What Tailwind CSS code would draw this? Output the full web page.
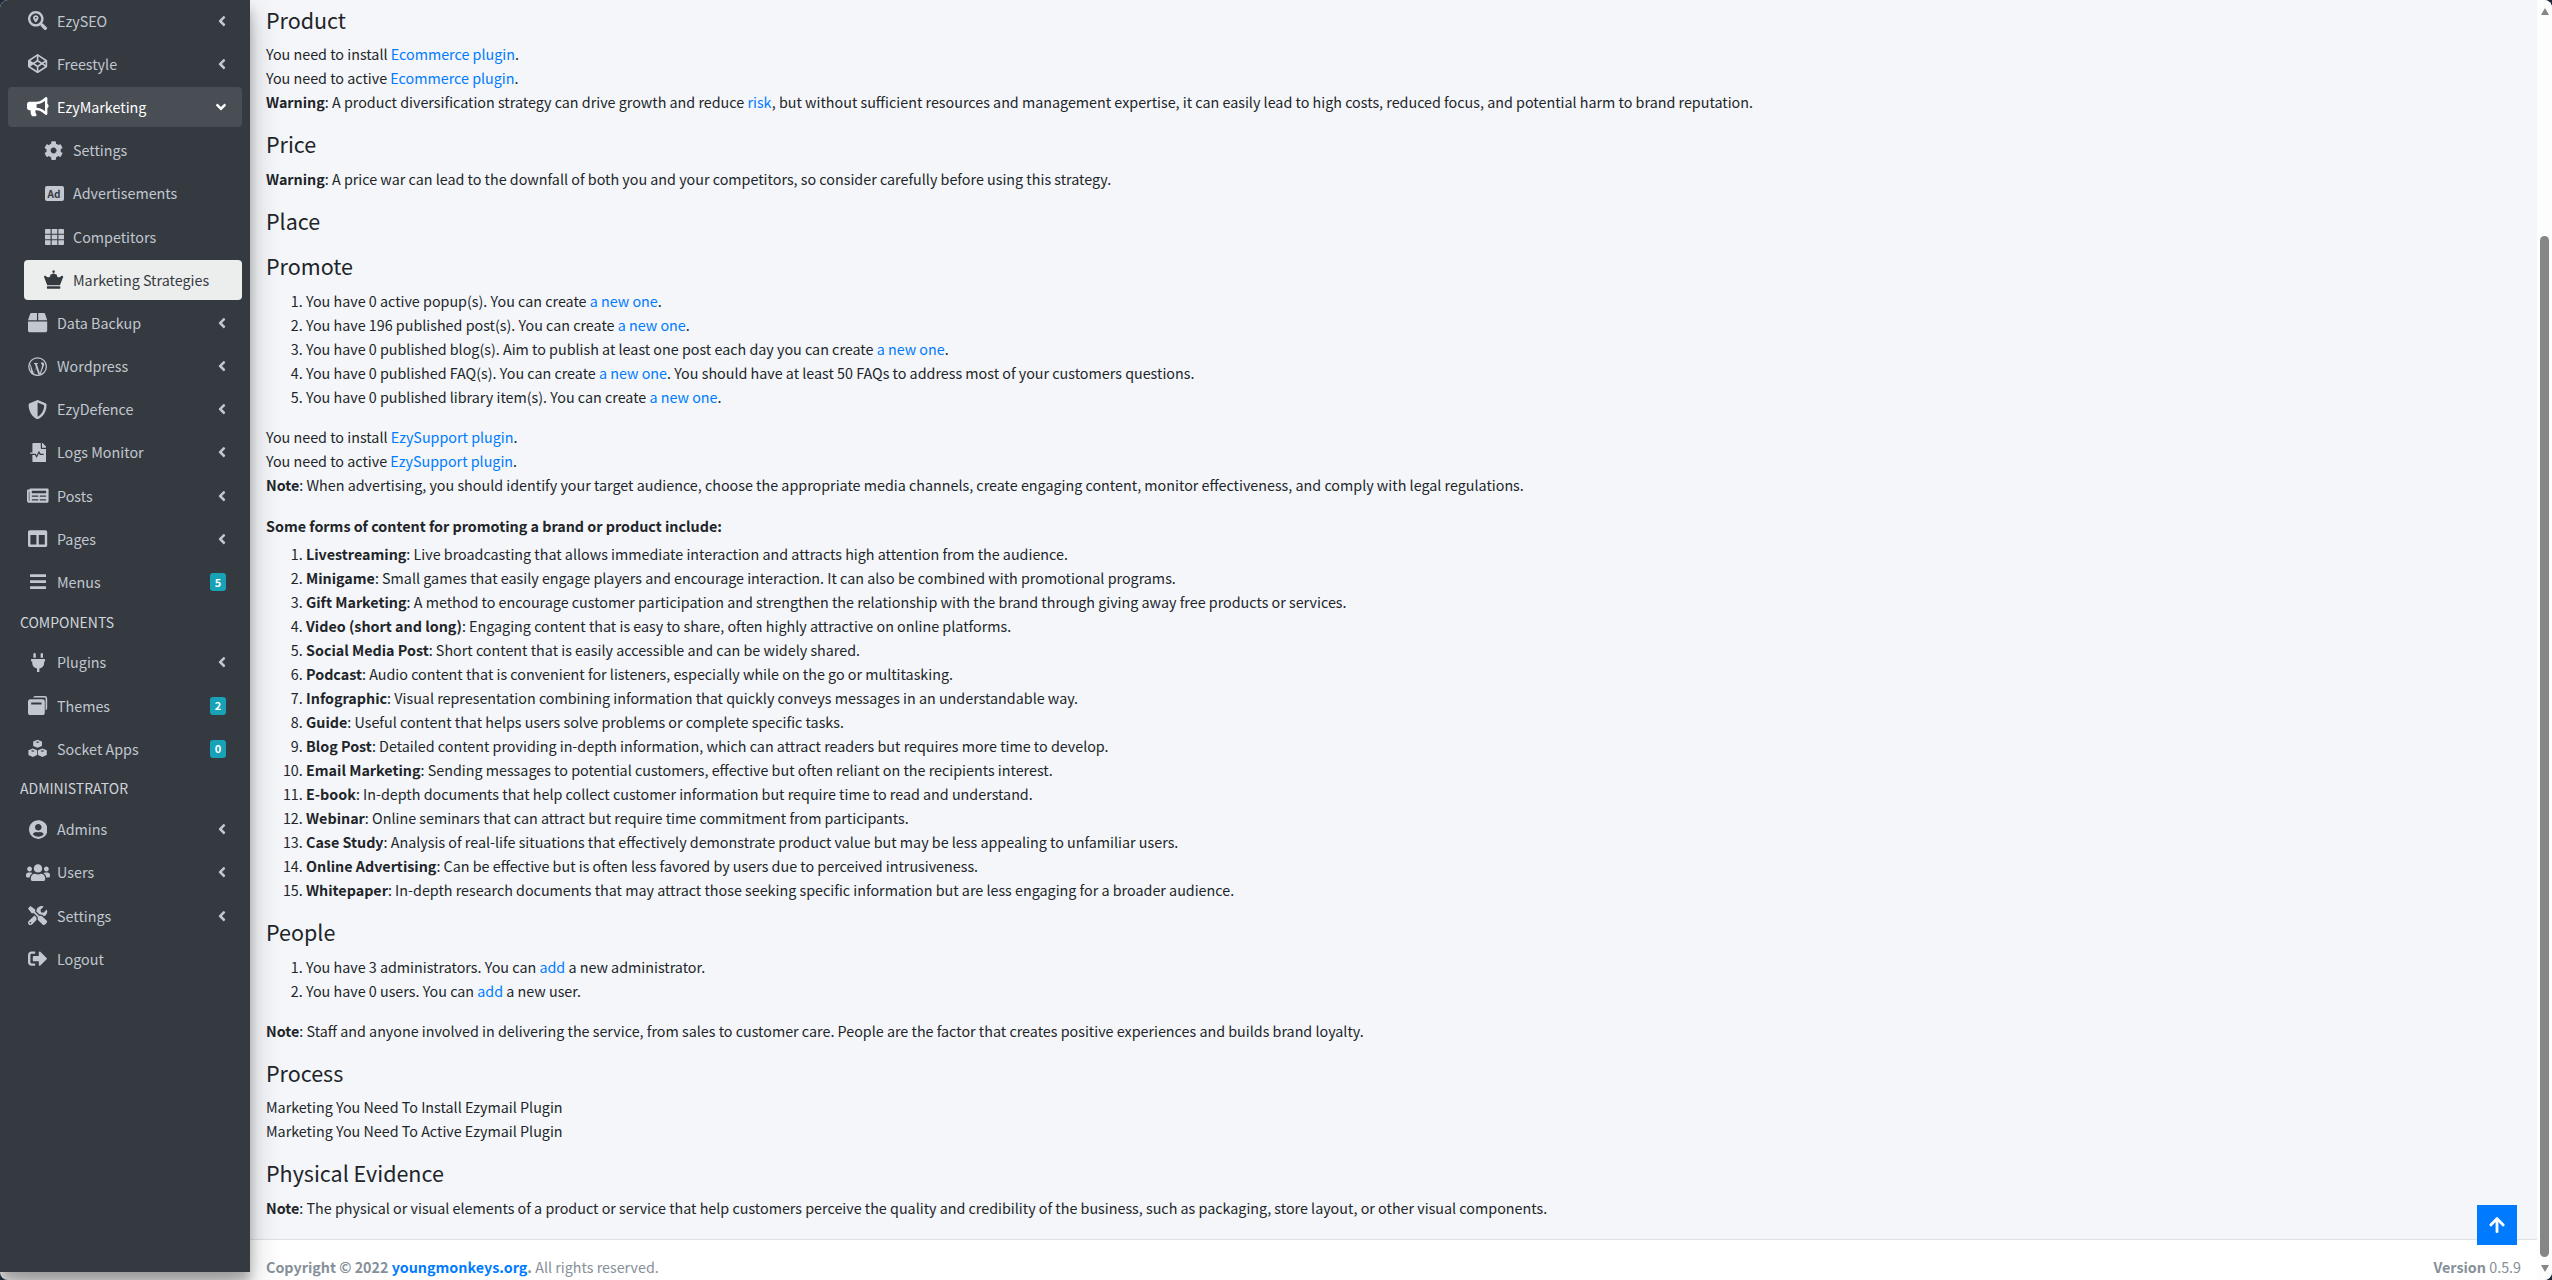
<!DOCTYPE html>
<html lang="en">
<head>
<meta charset="utf-8">
<title>Marketing Strategies</title>
<script src="https://cdn.jsdelivr.net/npm/@tailwindcss/browser@4"></script>
</head>
<body class="bg-[#1d2a3a] overflow-hidden font-['Noto_Sans_CJK_SC','Noto_Sans',sans-serif] text-[14.32px] leading-[24px] text-[#212529]">
<svg class="hidden" aria-hidden="true"><defs>
<symbol id="chev" viewBox="0 0 256 512"><path fill="currentColor" d="M31.7 239l136-136c9.4-9.4 24.6-9.4 33.9 0l22.6 22.6c9.4 9.4 9.4 24.6 0 33.9L127.9 256l96.4 96.4c9.4 9.4 9.4 24.6 0 33.9L201.7 413c-9.4 9.4-24.6 9.4-33.9 0l-136-136c-9.5-9.4-9.5-24.6-.1-34z"/></symbol>
</defs></svg>
<div class="relative flex w-[2552px] h-[1280px] overflow-hidden rounded-[8px] bg-white">
  <aside class="relative z-10 shrink-0 w-[250px] h-[1272px] bg-[#343a40] text-[#c2c7d0] pt-[0.6px] shadow-[0_14px_28px_rgba(0,0,0,0.25),0_10px_10px_rgba(0,0,0,0.22)]">
    <nav class="flex flex-col gap-[3.2px]">
      <a class="flex items-center h-10 mx-2 px-4"><span class="flex justify-center w-7 mr-[5px]"><svg class="h-[19.2px]" viewBox="0 0 512 512"><path fill="currentColor" d="M505.04 442.66l-99.71-99.69c-4.5-4.5-10.6-7-17-7h-16.3c27.6-35.3 44-79.69 44-127.99C416.03 93.09 322.92 0 208.02 0S0 93.09 0 207.98s93.11 207.98 208.02 207.98c48.3 0 92.71-16.4 128.01-44v16.3c0 6.4 2.5 12.5 7 17l99.71 99.69c9.4 9.4 24.6 9.4 33.9 0l28.3-28.3c9.4-9.4 9.4-24.59.1-33.99zm-297.02-90.7c-79.54 0-144-64.34-144-143.98 0-79.53 64.35-143.98 144-143.98 79.54 0 144 64.34 144 143.98 0 79.53-64.35 143.98-144 143.98zm.02-239.96c-40.78 0-73.84 33.05-73.84 73.83 0 32.96 48.26 93.05 66.75 114.86a9.24 9.24 0 0 0 14.18 0c18.49-21.81 66.75-81.9 66.75-114.86 0-40.78-33.06-73.83-73.84-73.83zm0 96c-13.59 0-24.61-11.02-24.61-24.61s11.02-24.61 24.61-24.61 24.61 11.02 24.61 24.61-11.01 24.61-24.61 24.61z"/></svg></span><span class="flex-1">EzySEO</span><svg class="w-2 h-4"><use href="#chev"/></svg></a>
      <a class="flex items-center h-10 mx-2 px-4"><span class="flex justify-center w-7 mr-[5px]"><svg class="h-[19.2px]" viewBox="0 0 512 512"><path fill="currentColor" d="M502.285 159.704l-234-156c-7.987-4.915-16.511-4.96-24.571 0l-234 156C3.714 163.703 0 170.847 0 177.989v155.999c0 7.143 3.714 14.286 9.715 18.286l234 156.022c7.987 4.915 16.511 4.96 24.571 0l234-156.022c6-3.999 9.715-11.143 9.715-18.286V177.989c-.001-7.142-3.715-14.286-9.716-18.285zM278 63.131l172.286 114.858-76.857 51.429L278 165.703V63.131zm-44 0v102.572l-95.429 63.715-76.857-51.429L234 63.131zM44 219.132v73.715l55.143-36.857L44 219.132zm190 229.715L61.714 333.989l76.857-51.429L234 346.275v102.572zm22-140.858l-77.715-52 77.715-52 77.715 52-77.715 52zm22 140.858V346.275l95.429-63.715 76.857 51.429L278 448.847zm190-156l-55.143-36.857L468 219.132v73.715z"/></svg></span><span class="flex-1">Freestyle</span><svg class="w-2 h-4"><use href="#chev"/></svg></a>
      <a class="flex items-center h-10 mx-2 px-4 rounded bg-white/10 text-white"><span class="flex justify-center w-7 mr-[5px]"><svg class="h-[19.2px]" viewBox="0 0 576 512"><path fill="currentColor" d="M576 240c0-23.63-12.95-44.04-32-55.12V32.01C544 23.26 537.02 0 512 0c-7.12 0-14.19 2.38-19.98 7.02l-85.03 68.03C364.28 109.19 310.66 128 256 128H64c-35.35 0-64 28.65-64 64v96c0 35.35 28.65 64 64 64h33.7c-1.39 10.48-2.18 21.14-2.18 32 0 39.77 9.26 77.35 25.56 110.94 5.19 10.69 16.52 17.06 28.4 17.06h74.28c26.05 0 41.69-29.84 25.9-50.56-16.4-21.52-26.15-48.36-26.15-77.44 0-11.11 1.62-21.79 4.41-32H256c54.66 0 108.28 18.81 150.98 52.95l85.03 68.03a32.023 32.023 0 0 0 19.98 7.02c24.92 0 32-22.78 32-32V295.13C563.05 284.04 576 263.63 576 240zm-96 141.42l-33.05-26.44C392.95 311.78 325.12 288 256 288v-96c69.12 0 136.95-23.78 190.95-66.98L480 98.58v282.84z"/></svg></span><span class="flex-1">EzyMarketing</span><svg class="w-[10px] h-4" viewBox="0 0 320 512"><path fill="currentColor" d="M143 352.3L7 216.3c-9.4-9.4-9.4-24.6 0-33.9l22.6-22.6c9.4-9.4 24.6-9.4 33.9 0l96.4 96.4 96.4-96.4c9.4-9.4 24.6-9.4 33.9 0l22.6 22.6c9.4 9.4 9.4 24.6 0 33.9l-136 136c-9.2 9.4-24.4 9.4-33.8 0z"/></svg></a>
      <a class="flex items-center h-10 ml-6 mr-2 px-4"><span class="flex justify-center w-7 mr-[5px]"><svg class="h-[19.2px]" viewBox="0 0 512 512"><path fill="currentColor" d="M487.4 315.7l-42.6-24.6c4.3-23.2 4.3-47 0-70.2l42.6-24.6c4.9-2.8 7.1-8.6 5.5-14-11.1-35.6-30-67.8-54.7-94.6-3.8-4.1-10-5.1-14.8-2.3L380.8 110c-17.9-15.4-38.5-27.3-60.8-35.1V25.8c0-5.6-3.9-10.5-9.4-11.7-36.7-8.2-74.3-7.8-109.2 0-5.5 1.2-9.4 6.1-9.4 11.7V75c-22.2 7.9-42.8 19.8-60.8 35.1L88.7 85.5c-4.9-2.8-11-1.9-14.8 2.3-24.7 26.7-43.6 58.9-54.7 94.6-1.7 5.4.6 11.2 5.5 14L67.3 221c-4.3 23.2-4.3 47 0 70.2l-42.6 24.6c-4.9 2.8-7.1 8.6-5.5 14 11.1 35.6 30 67.8 54.7 94.6 3.8 4.1 10 5.1 14.8 2.3l42.6-24.6c17.9 15.4 38.5 27.3 60.8 35.1v49.2c0 5.6 3.9 10.5 9.4 11.7 36.7 8.2 74.3 7.8 109.2 0 5.5-1.2 9.4-6.1 9.4-11.7v-49.2c22.2-7.9 42.8-19.8 60.8-35.1l42.6 24.6c4.9 2.8 11 1.9 14.8-2.3 24.7-26.7 43.6-58.9 54.7-94.6 1.5-5.5-.7-11.3-5.6-14.1zM256 336c-44.1 0-80-35.9-80-80s35.9-80 80-80 80 35.9 80 80-35.9 80-80 80z"/></svg></span><span class="flex-1">Settings</span></a>
      <a class="flex items-center h-10 ml-6 mr-2 px-4"><span class="flex justify-center w-7 mr-[5px]"><span class="flex items-center justify-center w-[19px] h-[15px] rounded-[2px] bg-[#c2c7d0] text-[#343a40] text-[10px] leading-[15px] font-bold">Ad</span></span><span class="flex-1">Advertisements</span></a>
      <a class="flex items-center h-10 ml-6 mr-2 px-4"><span class="flex justify-center w-7 mr-[5px]"><svg class="h-[16px]" viewBox="0 0 19 16"><path fill="currentColor" d="M0 1a1 1 0 0 1 1-1h4.600v4.700H0zM6.700 0h5.600v4.700H6.700zM13.400 0H18a1 1 0 0 1 1 1v3.700h-5.600zM0 5.700h5.600v4.600H0zM6.700 5.700h5.600v4.600H6.700zM13.400 5.700H19v4.600h-5.600zM0 11.300h5.600V16H1a1 1 0 0 1-1-1zM6.700 11.300h5.600V16H6.700zM13.400 11.300H19V15a1 1 0 0 1-1 1h-4.600z"/></svg></span><span class="flex-1">Competitors</span></a>
      <a class="flex items-center h-10 ml-6 mr-2 px-4 rounded bg-[#eceded] text-[#343a40]"><span class="flex justify-center w-7 mr-[5px]"><svg class="h-[19.2px]" viewBox="0 0 640 640"><path fill="currentColor" d="M320 10a44 44 0 1 1-.1 0zM528 540H112c-8.800 0-16 7.200-16 16v50c0 8.800 7.200 16 16 16h416c8.800 0 16-7.200 16-16v-50c0-8.800-7.200-16-16-16zM40 190c-24 0-40 20-40 40 0 12 4 22 12 30l96 250h424l96-250c8-8 12-18 12-30 0-20-16-40-40-40-30 0-50 40-90 50-45 10-78-20-80-60-1-20-10-30-30-35-20-6-50-30-80-30s-60 24-80 30c-20 5-29 15-30 35-2 40-35 70-80 60-40-10-60-50-90-50z"/></svg></span><span class="flex-1">Marketing Strategies</span></a>
      <a class="flex items-center h-10 mx-2 px-4"><span class="flex justify-center w-7 mr-[5px]"><svg class="h-[19.2px]" viewBox="0 0 512 512"><path fill="currentColor" d="M509.500 184.600L458.900 32.800C452.400 13.200 434.100 0 413.400 0H272v192h238.700c-.4-2.500-.4-5-1.200-7.400zM240 0H98.600c-20.700 0-39 13.200-45.500 32.800L2.500 184.600c-.8 2.400-.8 4.900-1.200 7.400H240V0zM0 224v240c0 26.500 21.500 48 48 48h416c26.500 0 48-21.500 48-48V224H0z"/></svg></span><span class="flex-1">Data Backup</span><svg class="w-2 h-4"><use href="#chev"/></svg></a>
      <a class="flex items-center h-10 mx-2 px-4"><span class="flex justify-center w-7 mr-[5px]"><svg class="h-[19.2px]" viewBox="0 0 24 24"><circle cx="12" cy="12" r="11" fill="none" stroke="currentColor" stroke-width="1.600"/><path fill="currentColor" d="M3.200 9.200l4 11.300 2.700-7.700-1.300-4.100-1.100-.1V7.400h4.800v1.200h-1.300l3.900 11.700 2.400-7.700c.7-2.200.3-3.300-.5-4.300h-.6V7c1.500-.3 2.600-.2 3.300.2l.8 2.300-4.500 12-2.800.5-3-8.500-3 8.500-2.700-.6L2.500 9.500z"/></svg></span><span class="flex-1">Wordpress</span><svg class="w-2 h-4"><use href="#chev"/></svg></a>
      <a class="flex items-center h-10 mx-2 px-4"><span class="flex justify-center w-7 mr-[5px]"><svg class="h-[19.2px]" viewBox="0 0 512 512"><path fill="currentColor" d="M466.500 83.700l-192-80a48.150 48.150 0 0 0-36.900 0l-192 80C27.700 91.100 16 108.600 16 128c0 198.500 114.500 335.700 221.500 380.300 11.800 4.900 25.100 4.900 36.900 0C360.100 472.600 496 349.300 496 128c0-19.400-11.700-36.900-29.500-44.300zM256.100 446.300l-.1-381 175.900 73.300c-3.300 151.400-82.100 261.100-175.800 307.700z"/></svg></span><span class="flex-1">EzyDefence</span><svg class="w-2 h-4"><use href="#chev"/></svg></a>
      <a class="flex items-center h-10 mx-2 px-4"><span class="flex justify-center w-7 mr-[5px]"><svg class="h-[19.2px]" viewBox="0 0 448 512"><path fill="currentColor" d="M288 136V0H88C74.700 0 64 10.700 64 24v232H8c-4.400 0-8 3.600-8 8v16c0 4.400 3.600 8 8 8h140.900c3 0 5.800 1.700 7.200 4.400l19.900 39.800 56.800-113.700c2.900-5.900 11.400-5.900 14.300 0l34.700 69.500H352c8.800 0 16 7.200 16 16s-7.200 16-16 16h-89.900L240 275.800l-56.800 113.700c-2.900 5.900-11.400 5.900-14.300 0L134.100 320H64v168c0 13.300 10.700 24 24 24h336c13.300 0 24-10.700 24-24V160H312c-13.200 0-24-10.800-24-24zm153-31L343.100 7c-4.500-4.500-10.600-7-17-7H320v128h128v-6.100c0-6.300-2.500-12.400-7-16.900z"/></svg></span><span class="flex-1">Logs Monitor</span><svg class="w-2 h-4"><use href="#chev"/></svg></a>
      <a class="flex items-center h-10 mx-2 px-4"><span class="flex justify-center w-7 mr-[5px]"><svg class="h-[19.2px]" viewBox="0 0 576 512"><path fill="currentColor" d="M552 64H88c-13.255 0-24 10.745-24 24v8H24c-13.255 0-24 10.745-24 24v272c0 30.928 25.072 56 56 56h472c26.510 0 48-21.490 48-48V88c0-13.255-10.745-24-24-24zM56 400a8 8 0 0 1-8-8V144h16v248a8 8 0 0 1-8 8zm236-16H140c-6.627 0-12-5.373-12-12v-8c0-6.627 5.373-12 12-12h152c6.627 0 12 5.373 12 12v8c0 6.627-5.373 12-12 12zm208 0H348c-6.627 0-12-5.373-12-12v-8c0-6.627 5.373-12 12-12h152c6.627 0 12 5.373 12 12v8c0 6.627-5.373 12-12 12zm-208-96H140c-6.627 0-12-5.373-12-12v-8c0-6.627 5.373-12 12-12h152c6.627 0 12 5.373 12 12v8c0 6.627-5.373 12-12 12zm208 0H348c-6.627 0-12-5.373-12-12v-8c0-6.627 5.373-12 12-12h152c6.627 0 12 5.373 12 12v8c0 6.627-5.373 12-12 12zm0-96H140c-6.627 0-12-5.373-12-12v-40c0-6.627 5.373-12 12-12h360c6.627 0 12 5.373 12 12v40c0 6.627-5.373 12-12 12z"/></svg></span><span class="flex-1">Posts</span><svg class="w-2 h-4"><use href="#chev"/></svg></a>
      <a class="flex items-center h-10 mx-2 px-4"><span class="flex justify-center w-7 mr-[5px]"><svg class="h-[19.2px]" viewBox="0 0 512 512"><path fill="currentColor" d="M464 32H48C21.490 32 0 53.490 0 80v352c0 26.510 21.490 48 48 48h416c26.510 0 48-21.490 48-48V80c0-26.510-21.490-48-48-48zM224 416H64V160h160v256zm224 0H288V160h160v256z"/></svg></span><span class="flex-1">Pages</span><svg class="w-2 h-4"><use href="#chev"/></svg></a>
      <a class="flex items-center h-10 mx-2 px-4"><span class="flex justify-center w-7 mr-[5px]"><svg class="h-[19.2px]" viewBox="0 0 448 512"><path fill="currentColor" d="M16 132h416c8.837 0 16-7.163 16-16V76c0-8.837-7.163-16-16-16H16C7.163 60 0 67.163 0 76v40c0 8.837 7.163 16 16 16zm0 160h416c8.837 0 16-7.163 16-16v-40c0-8.837-7.163-16-16-16H16c-8.837 0-16 7.163-16 16v40c0 8.837 7.163 16 16 16zm0 160h416c8.837 0 16-7.163 16-16v-40c0-8.837-7.163-16-16-16H16c-8.837 0-16 7.163-16 16v40c0 8.837 7.163 16 16 16z"/></svg></span><span class="flex-1">Menus</span><span class="flex items-center justify-center w-4 h-[18px] rounded-[3px] bg-[#17a2b8] text-white text-[11px] leading-none font-bold">5</span></a>
      <div class="flex items-center h-[34px] pl-5 text-[14px] leading-[21px] text-[#d0d4db]">COMPONENTS</div>
      <a class="flex items-center h-10 mx-2 px-4"><span class="flex justify-center w-7 mr-[5px]"><svg class="h-[19.2px]" viewBox="0 0 384 512"><path fill="currentColor" d="M320 32a32 32 0 0 0-64 0v96h64Zm48 128H16A16 16 0 0 0 0 176v32a16 16 0 0 0 16 16H32v32A160.070 160.070 0 0 0 160 412.800V512h64V412.800A160.070 160.070 0 0 0 352 256V224h16a16 16 0 0 0 16-16V176A16 16 0 0 0 368 160ZM128 32a32 32 0 0 0-64 0v96h64Z"/></svg></span><span class="flex-1">Plugins</span><svg class="w-2 h-4"><use href="#chev"/></svg></a>
      <a class="flex items-center h-10 mx-2 px-4"><span class="flex justify-center w-7 mr-[5px]"><svg class="h-[19.2px]" viewBox="0 0 24 24"><path fill="currentColor" d="M9 0h12a3 3 0 0 1 3 3v12a3 3 0 0 1-2 2.800V3a1 1 0 0 0-1-1H6.200A3 3 0 0 1 9 0z"/><path fill="currentColor" fill-rule="evenodd" d="M3 4h15a3 3 0 0 1 3 3v14a3 3 0 0 1-3 3H3a3 3 0 0 1-3-3V7a3 3 0 0 1 3-3zm1 4v2.500h13V8z"/></svg></span><span class="flex-1">Themes</span><span class="flex items-center justify-center w-4 h-[18px] rounded-[3px] bg-[#17a2b8] text-white text-[11px] leading-none font-bold">2</span></a>
      <a class="flex items-center h-10 mx-2 px-4"><span class="flex justify-center w-7 mr-[5px]"><svg class="h-[19.2px]" viewBox="0 0 24 24"><path fill="currentColor" fill-rule="evenodd" d="M12 1l5.500 2.100v5.700L12 11 6.500 8.800V3.100zM12 3l-2.500.9 2.500 1 2.500-1z"/><path fill="currentColor" fill-rule="evenodd" d="M6 12l5.500 2.100v5.800L6 22.500.5 20v-5.900zM6 14l-2.500.9 2.500 1 2.500-1z"/><path fill="currentColor" fill-rule="evenodd" d="M18 12l5.500 2.100v5.800L18 22.500 12.500 20v-5.900zM18 14l-2.500.9 2.500 1 2.500-1z"/></svg></span><span class="flex-1">Socket Apps</span><span class="flex items-center justify-center w-4 h-[18px] rounded-[3px] bg-[#17a2b8] text-white text-[11px] leading-none font-bold">0</span></a>
      <div class="flex items-center h-[34px] pl-5 text-[14px] leading-[21px] text-[#d0d4db]">ADMINISTRATOR</div>
      <a class="flex items-center h-10 mx-2 px-4"><span class="flex justify-center w-7 mr-[5px]"><svg class="h-[19.2px]" viewBox="0 0 496 512"><path fill="currentColor" d="M248 8C111 8 0 119 0 256s111 248 248 248 248-111 248-248S385 8 248 8zm0 96c48.600 0 88 39.400 88 88s-39.400 88-88 88-88-39.400-88-88 39.400-88 88-88zm0 344c-58.700 0-111.300-26.600-146.500-68.200 18.800-35.400 55.600-59.800 98.500-59.800 2.400 0 4.800.4 7.100 1.100 13 4.200 26.600 6.900 40.900 6.900 14.300 0 28-2.700 40.900-6.900 2.300-.7 4.700-1.100 7.100-1.100 42.900 0 79.700 24.400 98.500 59.800C359.300 421.400 306.700 448 248 448z"/></svg></span><span class="flex-1">Admins</span><svg class="w-2 h-4"><use href="#chev"/></svg></a>
      <a class="flex items-center h-10 mx-2 px-4"><span class="flex justify-center w-7 mr-[5px]"><svg class="h-[19.2px]" viewBox="0 0 640 512"><path fill="currentColor" d="M96 224c35.300 0 64-28.700 64-64s-28.700-64-64-64-64 28.700-64 64 28.700 64 64 64zm448 0c35.300 0 64-28.700 64-64s-28.700-64-64-64-64 28.700-64 64 28.700 64 64 64zm32 32h-64c-17.600 0-33.500 7.100-45.100 18.600 40.300 22.100 68.900 62 75.100 109.400h66c17.700 0 32-14.300 32-32v-32c0-35.300-28.700-64-64-64zm-256 0c61.900 0 112-50.100 112-112S381.900 32 320 32 208 82.100 208 144s50.100 112 112 112zm76.800 32h-8.300c-20.800 10-43.900 16-68.500 16s-47.600-6-68.500-16h-8.300C179.600 288 128 339.600 128 403.200V432c0 26.500 21.500 48 48 48h288c26.500 0 48-21.500 48-48v-28.800c0-63.600-51.600-115.200-115.200-115.200zm-223.700-13.400C161.500 263.100 145.600 256 128 256H64c-35.300 0-64 28.700-64 64v32c0 17.700 14.300 32 32 32h65.900c6.300-47.400 34.900-87.300 75.200-109.400z"/></svg></span><span class="flex-1">Users</span><svg class="w-2 h-4"><use href="#chev"/></svg></a>
      <a class="flex items-center h-10 mx-2 px-4"><span class="flex justify-center w-7 mr-[5px]"><svg class="h-[19.2px]" viewBox="0 0 512 512"><path fill="currentColor" d="M501.100 395.700L384 278.600c-23.100-23.100-57.600-27.600-85.400-13.900L192 158.100V96L64 0 0 64l96 128h62.100l106.600 106.600c-13.600 27.800-9.200 62.300 13.900 85.400l117.100 117.100c14.600 14.600 38.200 14.600 52.700 0l52.700-52.700c14.500-14.600 14.500-38.200 0-52.700zM331.700 225c28.300 0 54.900 11 74.900 31l19.400 19.400c15.800-6.900 30.800-16.500 43.800-29.500 37.100-37.100 49.700-89.300 37.900-136.700-2.200-9-13.500-12.100-20.100-5.500l-74.400 74.400-67.900-11.300L334 98.900l74.400-74.400c6.600-6.600 3.400-17.900-5.700-20.200-47.400-11.700-99.600.9-136.600 37.900-28.500 28.500-41.900 66.100-41.200 103.600l82.100 82.100c8.100-1.900 16.500-2.900 24.700-2.900zm-103.900 82l-56.700-56.700L18.700 402.800c-25 25-25 65.500 0 90.500s65.500 25 90.500 0l123.600-123.600c-7.600-19.900-9.900-41.600-5-62.700zM64 472c-13.200 0-24-10.800-24-24 0-13.300 10.700-24 24-24s24 10.700 24 24c0 13.200-10.700 24-24 24z"/></svg></span><span class="flex-1">Settings</span><svg class="w-2 h-4"><use href="#chev"/></svg></a>
      <a class="flex items-center h-10 mx-2 px-4"><span class="flex justify-center w-7 mr-[5px]"><svg class="h-[19.2px]" viewBox="0 0 512 512"><path fill="currentColor" d="M497 273L329 441c-15 15-41 4.500-41-17v-96H152c-13.300 0-24-10.700-24-24v-96c0-13.300 10.700-24 24-24h136V88c0-21.400 25.900-32 41-17l168 168c9.300 9.400 9.300 24.600 0 34zM192 436v-40c0-6.600-5.400-12-12-12H96c-17.700 0-32-14.300-32-32V160c0-17.700 14.300-32 32-32h84c6.600 0 12-5.400 12-12V76c0-6.600-5.400-12-12-12H96c-53 0-96 43-96 96v192c0 53 43 96 96 96h84c6.600 0 12-5.400 12-12z"/></svg></span><span class="flex-1">Logout</span></a>
    </nav>
  </aside>

  <div class="flex flex-col w-[2287px] h-[1280px] shrink-0">
    <main class="h-[1239px] shrink-0 bg-[#f4f6f9] px-4 pt-[5.5px]">
      <h4 class="text-[21.5px] leading-[27px] mb-[9.8px]">Product</h4>
      <div class="mb-4">
        <p>You need to install <a class="text-[#007bff]">Ecommerce plugin</a>.</p>
        <p>You need to active <a class="text-[#007bff]">Ecommerce plugin</a>.</p>
        <p><b class="font-bold">Warning</b>: A product diversification strategy can drive growth and reduce <a class="text-[#007bff]">risk</a>, but without sufficient resources and management expertise, it can easily lead to high costs, reduced focus, and potential harm to brand reputation.</p>
      </div>
      <h4 class="text-[21.5px] leading-[27px] mb-[9.8px]">Price</h4>
      <p class="mb-4"><b class="font-bold">Warning</b>: A price war can lead to the downfall of both you and your competitors, so consider carefully before using this strategy.</p>
      <h4 class="text-[21.5px] leading-[27px] mb-[17.8px]">Place</h4>
      <h4 class="text-[21.5px] leading-[27px] mb-[9.8px]">Promote</h4>
      <ol class="list-decimal pl-10 mb-4">
        <li>You have 0 active popup(s). You can create <a class="text-[#007bff]">a new one</a>.</li>
        <li>You have 196 published post(s). You can create <a class="text-[#007bff]">a new one</a>.</li>
        <li>You have 0 published blog(s). Aim to publish at least one post each day you can create <a class="text-[#007bff]">a new one</a>.</li>
        <li>You have 0 published FAQ(s). You can create <a class="text-[#007bff]">a new one</a>. You should have at least 50 FAQs to address most of your customers questions.</li>
        <li>You have 0 published library item(s). You can create <a class="text-[#007bff]">a new one</a>.</li>
      </ol>
      <div class="mb-4">
        <p>You need to install <a class="text-[#007bff]">EzySupport plugin</a>.</p>
        <p>You need to active <a class="text-[#007bff]">EzySupport plugin</a>.</p>
        <p><b class="font-bold">Note</b>: When advertising, you should identify your target audience, choose the appropriate media channels, create engaging content, monitor effectiveness, and comply with legal regulations.</p>
      </div>
      <h6 class="font-bold leading-[19.2px] pt-[3px] mb-[7px]">Some forms of content for promoting a brand or product include:</h6>
      <ol class="list-decimal pl-10 mb-4">
        <li><b class="font-bold">Livestreaming</b>: Live broadcasting that allows immediate interaction and attracts high attention from the audience.</li>
        <li><b class="font-bold">Minigame</b>: Small games that easily engage players and encourage interaction. It can also be combined with promotional programs.</li>
        <li><b class="font-bold">Gift Marketing</b>: A method to encourage customer participation and strengthen the relationship with the brand through giving away free products or services.</li>
        <li><b class="font-bold">Video (short and long)</b>: Engaging content that is easy to share, often highly attractive on online platforms.</li>
        <li><b class="font-bold">Social Media Post</b>: Short content that is easily accessible and can be widely shared.</li>
        <li><b class="font-bold">Podcast</b>: Audio content that is convenient for listeners, especially while on the go or multitasking.</li>
        <li><b class="font-bold">Infographic</b>: Visual representation combining information that quickly conveys messages in an understandable way.</li>
        <li><b class="font-bold">Guide</b>: Useful content that helps users solve problems or complete specific tasks.</li>
        <li><b class="font-bold">Blog Post</b>: Detailed content providing in-depth information, which can attract readers but requires more time to develop.</li>
        <li><b class="font-bold">Email Marketing</b>: Sending messages to potential customers, effective but often reliant on the recipients interest.</li>
        <li><b class="font-bold">E-book</b>: In-depth documents that help collect customer information but require time to read and understand.</li>
        <li><b class="font-bold">Webinar</b>: Online seminars that can attract but require time commitment from participants.</li>
        <li><b class="font-bold">Case Study</b>: Analysis of real-life situations that effectively demonstrate product value but may be less appealing to unfamiliar users.</li>
        <li><b class="font-bold">Online Advertising</b>: Can be effective but is often less favored by users due to perceived intrusiveness.</li>
        <li><b class="font-bold">Whitepaper</b>: In-depth research documents that may attract those seeking specific information but are less engaging for a broader audience.</li>
      </ol>
      <h4 class="text-[21.5px] leading-[27px] mb-[9.8px]">People</h4>
      <ol class="list-decimal pl-10 mb-4">
        <li>You have 3 administrators. You can <a class="text-[#007bff]">add</a> a new administrator.</li>
        <li>You have 0 users. You can <a class="text-[#007bff]">add</a> a new user.</li>
      </ol>
      <p class="mb-4"><b class="font-bold">Note</b>: Staff and anyone involved in delivering the service, from sales to customer care. People are the factor that creates positive experiences and builds brand loyalty.</p>
      <h4 class="text-[21.5px] leading-[27px] mb-[9.8px]">Process</h4>
      <div class="mb-4">
        <p>Marketing You Need To Install Ezymail Plugin</p>
        <p>Marketing You Need To Active Ezymail Plugin</p>
      </div>
      <h4 class="text-[21.5px] leading-[27px] mb-[9.8px]">Physical Evidence</h4>
      <p><b class="font-bold">Note</b>: The physical or visual elements of a product or service that help customers perceive the quality and credibility of the business, such as packaging, store layout, or other visual components.</p>
    </main>
    <footer class="flex justify-between bg-white border-t border-[#dee2e6] px-4 pt-[15px] text-[#869099] h-[41px] shrink-0">
      <div><b class="font-bold">Copyright © 2022 <a class="text-[#007bff]">youngmonkeys.org</a>.</b> All rights reserved.</div>
      <div><b class="font-bold">Version</b> 0.5.9</div>
    </footer>
  </div>

  <div class="flex flex-col justify-between items-center flex-1 h-[1280px] bg-[#fdfdfd] pt-2 pb-2">
    <div class="w-0 h-0 border-x-[4.5px] border-x-transparent border-b-[7px] border-b-[#868686]"></div>
    <div class="w-[9px] h-[1021px] mt-[221px] mb-2 rounded-[5px] bg-[#868686]"></div>
    <div class="w-0 h-0 border-x-[4.5px] border-x-transparent border-t-[7px] border-t-[#868686]"></div>
  </div>

  <a class="absolute left-[2477px] top-[1205px] z-20 flex items-center justify-center w-10 h-10 bg-[#007bff] text-white"><svg class="h-[18px] w-[18px]" viewBox="0 0 448 512"><path fill="currentColor" d="M34.900 289.500l-22.200-22.200c-9.400-9.400-9.400-24.600 0-33.900L207 39c9.400-9.400 24.600-9.400 33.900 0l194.300 194.300c9.400 9.400 9.400 24.600 0 33.900L413 289.400c-9.500 9.500-25 9.300-34.300-.4L264 168.600V456c0 13.300-10.700 24-24 24h-32c-13.300 0-24-10.700-24-24V168.600L69.200 289.100c-9.300 9.800-24.800 10-34.300.4z"/></svg></a>
</div>
</body>
</html>
